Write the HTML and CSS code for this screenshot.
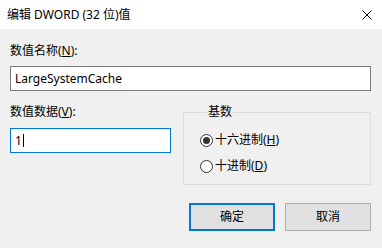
FILE: index.html
```html
<!DOCTYPE html>
<html lang="zh-CN">
<head>
<meta charset="utf-8">
<title>编辑 DWORD (32 位)值</title>
<link rel="stylesheet" href="styles.css">
</head>
<body>
<div class="dialog">
  <div class="titlebar">
    <span class="title">编辑 DWORD (32 位)值</span>
    <span class="close" aria-label="关闭">
      <svg width="10" height="10" viewBox="0 0 10 10"><path d="M0.5 0.5L9.5 9.5M9.5 0.5L0.5 9.5" stroke="#000" stroke-width="1" fill="none"/></svg>
    </span>
  </div>
  <div class="content">
    <div class="label">数值名称(<u>N</u>):</div>
    <div class="field readonly">LargeSystemCache</div>
    <div class="row">
      <div class="col">
        <div class="label">数值数据(<u>V</u>):</div>
        <div class="field focused"><span>1</span><span class="caret"></span></div>
      </div>
      <fieldset class="group">
        <legend>基数</legend>
        <div class="radio"><span class="dot checked"></span><span>十六进制(<u>H</u>)</span></div>
        <div class="radio"><span class="dot"></span><span>十进制(<u>D</u>)</span></div>
      </fieldset>
    </div>
    <div class="buttons">
      <div class="btn default">确定</div>
      <div class="btn">取消</div>
    </div>
  </div>
</div>
</body>
</html>
```
FILE: styles.css
```css
html, body {
  margin: 0;
  padding: 0;
}
body {
  width: 382px;
  height: 248px;
  overflow: hidden;
  background: #f0f0f0;
  font-family: "Noto Sans", "Noto Sans CJK SC", sans-serif;
  font-size: 12px;
  line-height: 16px;
  color: #000;
}
.dialog {
  width: 382px;
  height: 248px;
}
.titlebar {
  height: 29px;
  background: #fff;
  display: flex;
  align-items: center;
  justify-content: space-between;
  padding: 0 10px 0 7px;
}
.title {
  font-size: 12px;
}
.close {
  display: flex;
  width: 10px;
  height: 10px;
}
.content {
  padding: 14px 11px 0 10px;
}
.label {
  height: 16px;
}
u {
  text-decoration: underline;
  text-underline-offset: 1px;
}
.field {
  box-sizing: border-box;
  height: 25px;
  margin-top: 7px;
  background: #fff;
  border: 1px solid #7a7a7a;
  padding: 0 4px;
  display: flex;
  align-items: center;
}
.field.focused {
  border-color: #0078d7;
  margin-top: 8px;
}
.caret {
  display: inline-block;
  width: 1px;
  height: 13px;
  background: #000;
  margin-left: 1px;
}
.row {
  display: flex;
  gap: 12px;
  margin-top: 13px;
}
.col {
  width: 161px;
}
.group {
  box-sizing: border-box;
  width: 188px;
  margin: 0;
  padding: 12px 0 10px 16px;
  border: 1px solid #dcdcdc;
  min-inline-size: 0;
}
.group legend {
  margin-left: 7px;
  padding: 0 1px;
  line-height: 16px;
}
.radio {
  display: flex;
  align-items: center;
  height: 16px;
  gap: 2px;
}
.radio + .radio {
  margin-top: 10px;
}
.dot {
  box-sizing: border-box;
  width: 13px;
  height: 13px;
  border: 1px solid #333;
  border-radius: 50%;
  background: #fff;
  display: flex;
  align-items: center;
  justify-content: center;
}
.dot.checked::after {
  content: "";
  width: 7px;
  height: 7px;
  border-radius: 50%;
  background: #333;
}
.buttons {
  display: flex;
  justify-content: flex-end;
  gap: 10px;
  margin-top: 18px;
}
.btn {
  box-sizing: border-box;
  width: 86px;
  height: 28px;
  background: #e1e1e1;
  border: 1px solid #adadad;
  display: flex;
  align-items: center;
  justify-content: center;
}
.btn.default {
  border: 2px solid #0078d7;
}
```
